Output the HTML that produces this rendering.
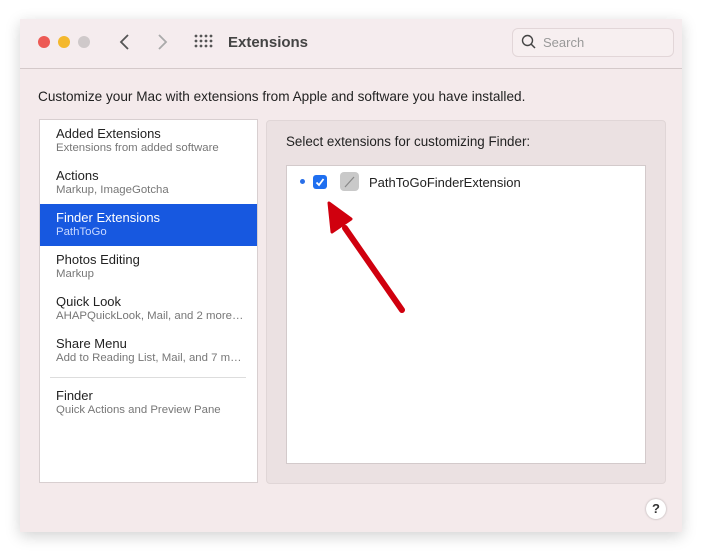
<!DOCTYPE html>
<html><head><style>
body{margin:0;width:702px;height:553px;background:#fff;font-family:"Liberation Sans",sans-serif;position:relative;overflow:hidden}
.win{position:absolute;left:20px;top:19px;width:662px;height:513px;background:#f4eaeb;box-shadow:0 4px 14px rgba(0,0,0,.18);}
.tb{position:absolute;left:0;top:0;width:662px;height:49px;border-bottom:1px solid #d4c9ca;background:#f5ecee}
.dot{position:absolute;top:17px;width:12px;height:12px;border-radius:50%}
.a{position:absolute}
.side{position:absolute;left:19px;top:100px;width:217px;height:362px;background:#fff;border:1px solid #d8cfd0}
.it{position:absolute;left:0;width:217px;height:42px}
.it .t{position:absolute;left:16px;top:6px;font-size:13px;color:#222}
.it .s{position:absolute;left:16px;top:22px;font-size:11.4px;color:#777}
</style></head><body>
<div class="win">
 <div class="tb">
  <div class="dot" style="left:18px;background:#ed5a55"></div>
  <div class="dot" style="left:38px;background:#f4b82d"></div>
  <div class="dot" style="left:58px;background:#cfc9ca"></div>
  <svg class="a" style="left:98px;top:14px" width="14" height="18"><path d="M10 2 L3 9 L10 16" fill="none" stroke="#555" stroke-width="1.8"/></svg>
  <svg class="a" style="left:135px;top:14px" width="14" height="18"><path d="M4 2 L11 9 L4 16" fill="none" stroke="#aaa" stroke-width="1.8"/></svg>
  <svg class="a" style="left:174px;top:15px" width="20" height="16" fill="#555"><g>
   <circle cx="2" cy="2" r="1.4"/><circle cx="7" cy="2" r="1.4"/><circle cx="12" cy="2" r="1.4"/><circle cx="17" cy="2" r="1.4"/>
   <circle cx="2" cy="7" r="1.4"/><circle cx="7" cy="7" r="1.4"/><circle cx="12" cy="7" r="1.4"/><circle cx="17" cy="7" r="1.4"/>
   <circle cx="2" cy="12" r="1.4"/><circle cx="7" cy="12" r="1.4"/><circle cx="12" cy="12" r="1.4"/><circle cx="17" cy="12" r="1.4"/></g></svg>
  <div class="a" style="left:208px;top:15px;font-size:15px;font-weight:bold;color:#444">Extensions</div>
  <div class="a" style="left:492px;top:9px;width:160px;height:27px;border:1px solid #e2d6d8;border-radius:6px;background:#f7eff0"></div>
  <svg class="a" style="left:501px;top:15px" width="16" height="16"><circle cx="6.5" cy="6.5" r="5" fill="none" stroke="#444" stroke-width="1.4"/><path d="M10 10 L14 14" stroke="#444" stroke-width="1.5"/></svg>
  <div class="a" style="left:523px;top:16px;font-size:13px;color:#999">Search</div>
 </div>
 <div class="a" style="left:18px;top:70px;font-size:13.6px;color:#222">Customize your Mac with extensions from Apple and software you have installed.</div>
 <div class="side">
  <div class="it" style="top:0"><div class="t">Added Extensions</div><div class="s">Extensions from added software</div></div>
  <div class="it" style="top:42px"><div class="t">Actions</div><div class="s">Markup, ImageGotcha</div></div>
  <div class="it" style="top:84px;background:#1758e0"><div class="t" style="color:#fff">Finder Extensions</div><div class="s" style="color:#c8d8ff">PathToGo</div></div>
  <div class="it" style="top:126px"><div class="t">Photos Editing</div><div class="s">Markup</div></div>
  <div class="it" style="top:168px"><div class="t">Quick Look</div><div class="s">AHAPQuickLook, Mail, and 2 more…</div></div>
  <div class="it" style="top:210px"><div class="t">Share Menu</div><div class="s">Add to Reading List, Mail, and 7 m…</div></div>
  <div class="a" style="left:10px;top:257px;width:196px;height:1px;background:#ddd"></div>
  <div class="it" style="top:262px"><div class="t">Finder</div><div class="s">Quick Actions and Preview Pane</div></div>
 </div>
 <div class="a" style="left:246px;top:101px;width:398px;height:362px;background:#ebe1e2;border:1px solid #e0d6d7;border-radius:4px"></div>
 <div class="a" style="left:266px;top:115px;font-size:13.4px;color:#222">Select extensions for customizing Finder:</div>
 <div class="a" style="left:266px;top:146px;width:358px;height:297px;background:#fff;border:1px solid #d3cacb"></div>
 <div class="a" style="left:280px;top:160px;width:5px;height:5px;border-radius:50%;background:#2a6fe8"></div>
 <div class="a" style="left:293px;top:156px;width:14px;height:14px;border-radius:3px;background:#1f6ff0"></div>
 <svg class="a" style="left:293px;top:156px" width="14" height="14"><path d="M3.5 7.5 L6 10 L10.5 4" fill="none" stroke="#fff" stroke-width="1.8"/></svg>
 <div class="a" style="left:320px;top:153px;width:19px;height:19px;border-radius:4px;background:#c9c9c9"></div>
 <svg class="a" style="left:320px;top:153px" width="19" height="19"><path d="M5 15 L14 5" stroke="#888" stroke-width="1.2"/></svg>
 <div class="a" style="left:349px;top:156px;font-size:13px;color:#222">PathToGoFinderExtension</div>
 <div class="a" style="left:626px;top:480px;width:20px;height:20px;border-radius:50%;background:#fff;box-shadow:0 0 2px rgba(0,0,0,.3);text-align:center;line-height:20px;font-size:13px;font-weight:bold;color:#333">?</div>
</div>
<svg class="a" style="left:0;top:0;position:absolute" width="702" height="553"><path d="M402 310 L345 228" stroke="#d0000e" stroke-width="6" stroke-linecap="round"/><polygon points="329,203 351,219 332,232" fill="#d0000e" stroke="#d0000e" stroke-width="3" stroke-linejoin="round"/></svg>
</body></html>
